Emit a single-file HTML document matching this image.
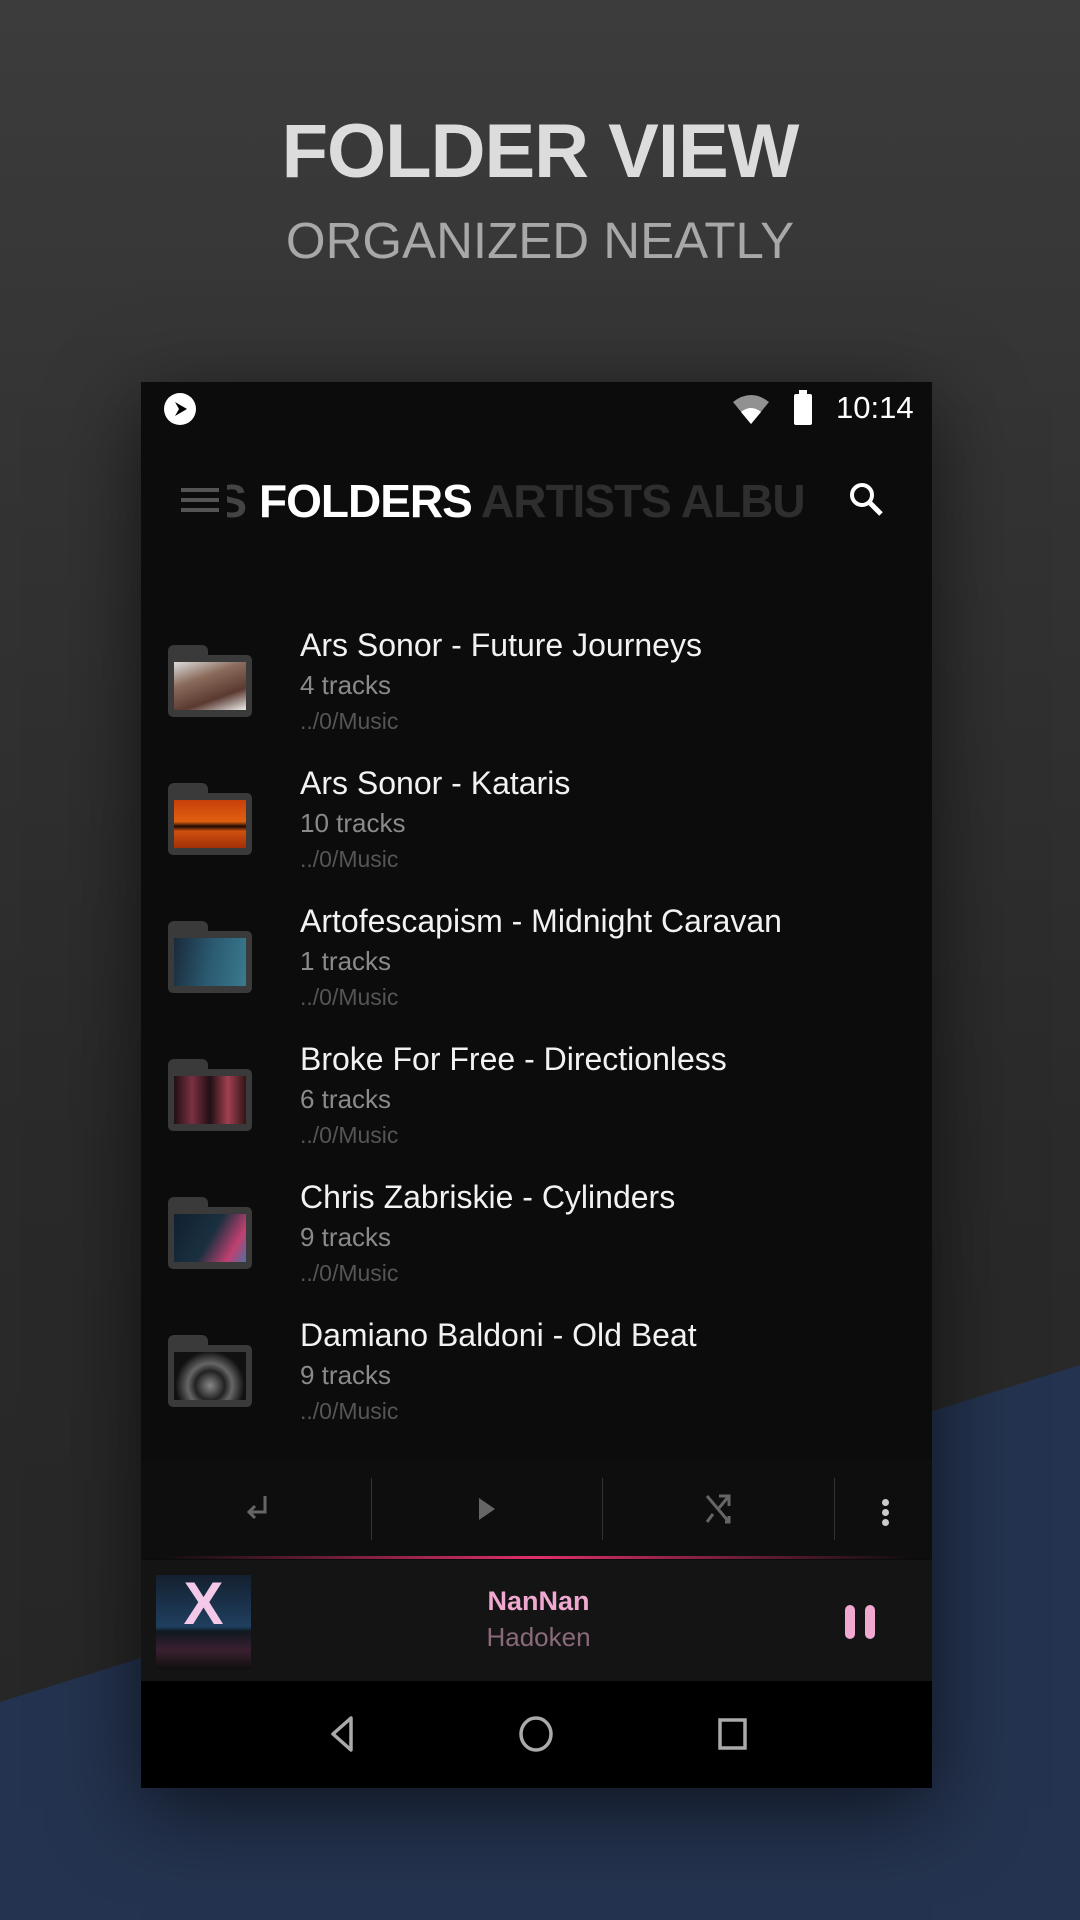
<!DOCTYPE html>
<html><head><meta charset="utf-8"><style>
*{margin:0;padding:0;box-sizing:border-box}
body{width:1080px;height:1920px;overflow:hidden;position:relative;font-family:"Liberation Sans",sans-serif;background:#2b2b2b}
.bg{position:absolute;inset:0;background:linear-gradient(180deg,#3c3c3c 0%,#333 25%,#2a2a2a 60%,#262626 100%)}
.h1{position:absolute;top:108px;width:100%;text-align:center;font-size:76px;font-weight:bold;color:#dcdcdc;letter-spacing:-1px}
.h2{position:absolute;top:211px;width:100%;text-align:center;font-size:51px;color:#a8a8a8;letter-spacing:0px}
.phone{position:absolute;left:141px;top:382px;width:791px;height:1406px;background:#0c0c0c;box-shadow:0 20px 80px rgba(0,0,0,.6);overflow:hidden}
.row{position:absolute;left:0;width:791px;height:138px}
.fold{position:absolute;left:27px;width:84px;height:72px}
.fold .tab{position:absolute;left:0;top:0;width:40px;height:16px;background:#3a3a3a;border-radius:6px 6px 0 0}
.fold .body{position:absolute;left:0;top:10px;width:84px;height:62px;background:#3a3a3a;border-radius:5px;padding:7px 6px}
.fold .img{width:100%;height:100%}
.t{position:absolute;left:159px;font-size:32px;color:#f2f2f2}
.s{position:absolute;left:159px;font-size:26px;color:#8a8a8a}
.p{position:absolute;left:159px;font-size:23px;color:#555}
</style></head><body>
<div class="bg"></div>
<svg style="position:absolute;left:0;top:0" width="1080" height="1920"><polygon points="0,1702 1080,1365 1080,1920 0,1920" fill="#24334f"/></svg>
<div class="h1">FOLDER VIEW</div>
<div class="h2">ORGANIZED NEATLY</div>
<div class="phone">
 <div style="position:absolute;left:23px;top:11px;width:32px;height:32px;border-radius:50%;background:#fff"></div>
 <svg style="position:absolute;left:31px;top:18px" width="18" height="18"><path d="M3 2 L15 9 L3 16 L7 9 Z" fill="#000"/></svg>
 <svg style="position:absolute;left:590px;top:10px" width="40" height="36"><path d="M2 10 Q20 -4 38 10 L20 32 Z" fill="#fff" opacity=".55"/><path d="M10 20 Q20 12 30 20 L20 32 Z" fill="#fff"/></svg>
 <div style="position:absolute;left:653px;top:12px;width:18px;height:31px;background:#fff;border-radius:2px"></div>
 <div style="position:absolute;left:658px;top:8px;width:8px;height:5px;background:#fff"></div>
 <div style="position:absolute;left:695px;top:8px;font-size:31px;color:#fff">10:14</div>
 <div style="position:absolute;left:40px;top:106px;width:38px;height:4px;background:#555;box-shadow:0 10px 0 #555,0 20px 0 #555"></div>
 <div style="position:absolute;left:86px;top:92px;font-size:46px;font-weight:bold;color:#444;width:20px;overflow:hidden;direction:rtl">S</div>
 <div style="position:absolute;left:118px;top:92px;font-size:46px;font-weight:bold;color:#fff;letter-spacing:-1px">FOLDERS</div>
 <div style="position:absolute;left:340px;top:92px;font-size:46px;font-weight:bold;color:#2e2e2e;letter-spacing:-1px">ARTISTS ALBU</div>
 <svg style="position:absolute;left:706px;top:98px" width="40" height="40"><circle cx="15" cy="15" r="10" stroke="#fff" stroke-width="4" fill="none"/><path d="M22 22 L34 34" stroke="#fff" stroke-width="5"/></svg>

 <div class="row" style="top:238px"><div class="fold" style="top:25px"><div class="tab"></div><div class="body"><div class="img" style="background:linear-gradient(160deg,#ddd 0%,#8a6a5a 35%,#5a3a30 70%,#eee 100%)"></div></div></div><div class="t" style="top:7px">Ars Sonor - Future Journeys</div><div class="s" style="top:50px">4 tracks</div><div class="p" style="top:88px">../0/Music</div></div>
 <div class="row" style="top:376px"><div class="fold" style="top:25px"><div class="tab"></div><div class="body"><div class="img" style="background:linear-gradient(180deg,#c8400a 0%,#e06010 45%,#1a0a05 55%,#d05010 65%,#a03008 100%)"></div></div></div><div class="t" style="top:7px">Ars Sonor - Kataris</div><div class="s" style="top:50px">10 tracks</div><div class="p" style="top:88px">../0/Music</div></div>
 <div class="row" style="top:514px"><div class="fold" style="top:25px"><div class="tab"></div><div class="body"><div class="img" style="background:linear-gradient(100deg,#1a2a3a 0%,#2a5a70 50%,#3a7a90 100%)"></div></div></div><div class="t" style="top:7px">Artofescapism - Midnight Caravan</div><div class="s" style="top:50px">1 tracks</div><div class="p" style="top:88px">../0/Music</div></div>
 <div class="row" style="top:652px"><div class="fold" style="top:25px"><div class="tab"></div><div class="body"><div class="img" style="background:linear-gradient(90deg,#201015,#7a3040,#201015,#a04050,#301518)"></div></div></div><div class="t" style="top:7px">Broke For Free - Directionless</div><div class="s" style="top:50px">6 tracks</div><div class="p" style="top:88px">../0/Music</div></div>
 <div class="row" style="top:790px"><div class="fold" style="top:25px"><div class="tab"></div><div class="body"><div class="img" style="background:linear-gradient(120deg,#102030 0%,#1a3040 50%,#c04070 80%,#5070a0 100%)"></div></div></div><div class="t" style="top:7px">Chris Zabriskie - Cylinders</div><div class="s" style="top:50px">9 tracks</div><div class="p" style="top:88px">../0/Music</div></div>
 <div class="row" style="top:928px"><div class="fold" style="top:25px"><div class="tab"></div><div class="body"><div class="img" style="background:radial-gradient(circle at 50% 70%,#888 0,#222 30%,#666 45%,#111 70%)"></div></div></div><div class="t" style="top:7px">Damiano Baldoni - Old Beat</div><div class="s" style="top:50px">9 tracks</div><div class="p" style="top:88px">../0/Music</div></div>

 <div style="position:absolute;left:0;top:1078px;width:791px;height:98px;background:#0e0e0e"></div>
 <div style="position:absolute;left:230px;top:1096px;width:1px;height:62px;background:#333"></div>
 <div style="position:absolute;left:461px;top:1096px;width:1px;height:62px;background:#333"></div>
 <div style="position:absolute;left:693px;top:1096px;width:1px;height:62px;background:#333"></div>
 <svg style="position:absolute;left:102px;top:1110px" width="30" height="34"><path d="M22 4 V20 H6 M12 14 L6 20 L12 26" stroke="#666" stroke-width="3" fill="none"/></svg>
 <svg style="position:absolute;left:336px;top:1114px" width="20" height="26"><path d="M2 2 L18 13 L2 24 Z" fill="#666"/></svg>
 <svg style="position:absolute;left:562px;top:1110px" width="30" height="34"><path d="M4 4 L26 30 M16 4 H26 V14 M26 4 L16 16 M10 22 L4 30 M22 30 H26 V24" stroke="#666" stroke-width="3" fill="none"/></svg>
 <div style="position:absolute;left:741px;top:1117px;width:7px;height:7px;border-radius:50%;background:#ccc;box-shadow:0 10px 0 #ccc,0 20px 0 #ccc"></div>
 <div style="position:absolute;left:20px;top:1174px;width:750px;height:3px;background:linear-gradient(90deg,rgba(200,30,80,0),#e0306a 50%,rgba(200,30,80,0))"></div>
 <div style="position:absolute;left:0;top:1178px;width:791px;height:121px;background:#141414"></div>
 <div style="position:absolute;left:15px;top:1193px;width:95px;height:94px;background:linear-gradient(180deg,#142030 0%,#1f3f5f 55%,#101820 60%,#3a2030 80%,#101010 100%)"></div>
 <div style="position:absolute;left:15px;top:1193px;width:95px;height:56px;text-align:center;font-size:60px;font-weight:bold;color:#f4c8e8;line-height:58px">X</div>
 <div style="position:absolute;left:0;top:1204px;width:791px;text-align:center;font-size:27px;font-weight:bold;color:#f0a8d0;padding-left:4px">NanNan</div>
 <div style="position:absolute;left:0;top:1240px;width:791px;text-align:center;font-size:26px;color:#8a6a7a;padding-left:4px">Hadoken</div>
 <div style="position:absolute;left:704px;top:1223px;width:10px;height:34px;border-radius:5px;background:#f0a8d0"></div>
 <div style="position:absolute;left:724px;top:1223px;width:10px;height:34px;border-radius:5px;background:#f0a8d0"></div>
 <div style="position:absolute;left:0;top:1299px;width:791px;height:107px;background:#000"></div>
 <svg style="position:absolute;left:180px;top:1330px" width="440" height="44"><path d="M30 6 L12 22 L30 38 Z" stroke="#aaa" stroke-width="3.5" fill="none" stroke-linejoin="round"/><ellipse cx="215" cy="22" rx="15" ry="16" stroke="#aaa" stroke-width="3.5" fill="none"/><rect x="399" y="8" width="25" height="28" stroke="#aaa" stroke-width="3.5" fill="none"/></svg>
</div>
</body></html>
